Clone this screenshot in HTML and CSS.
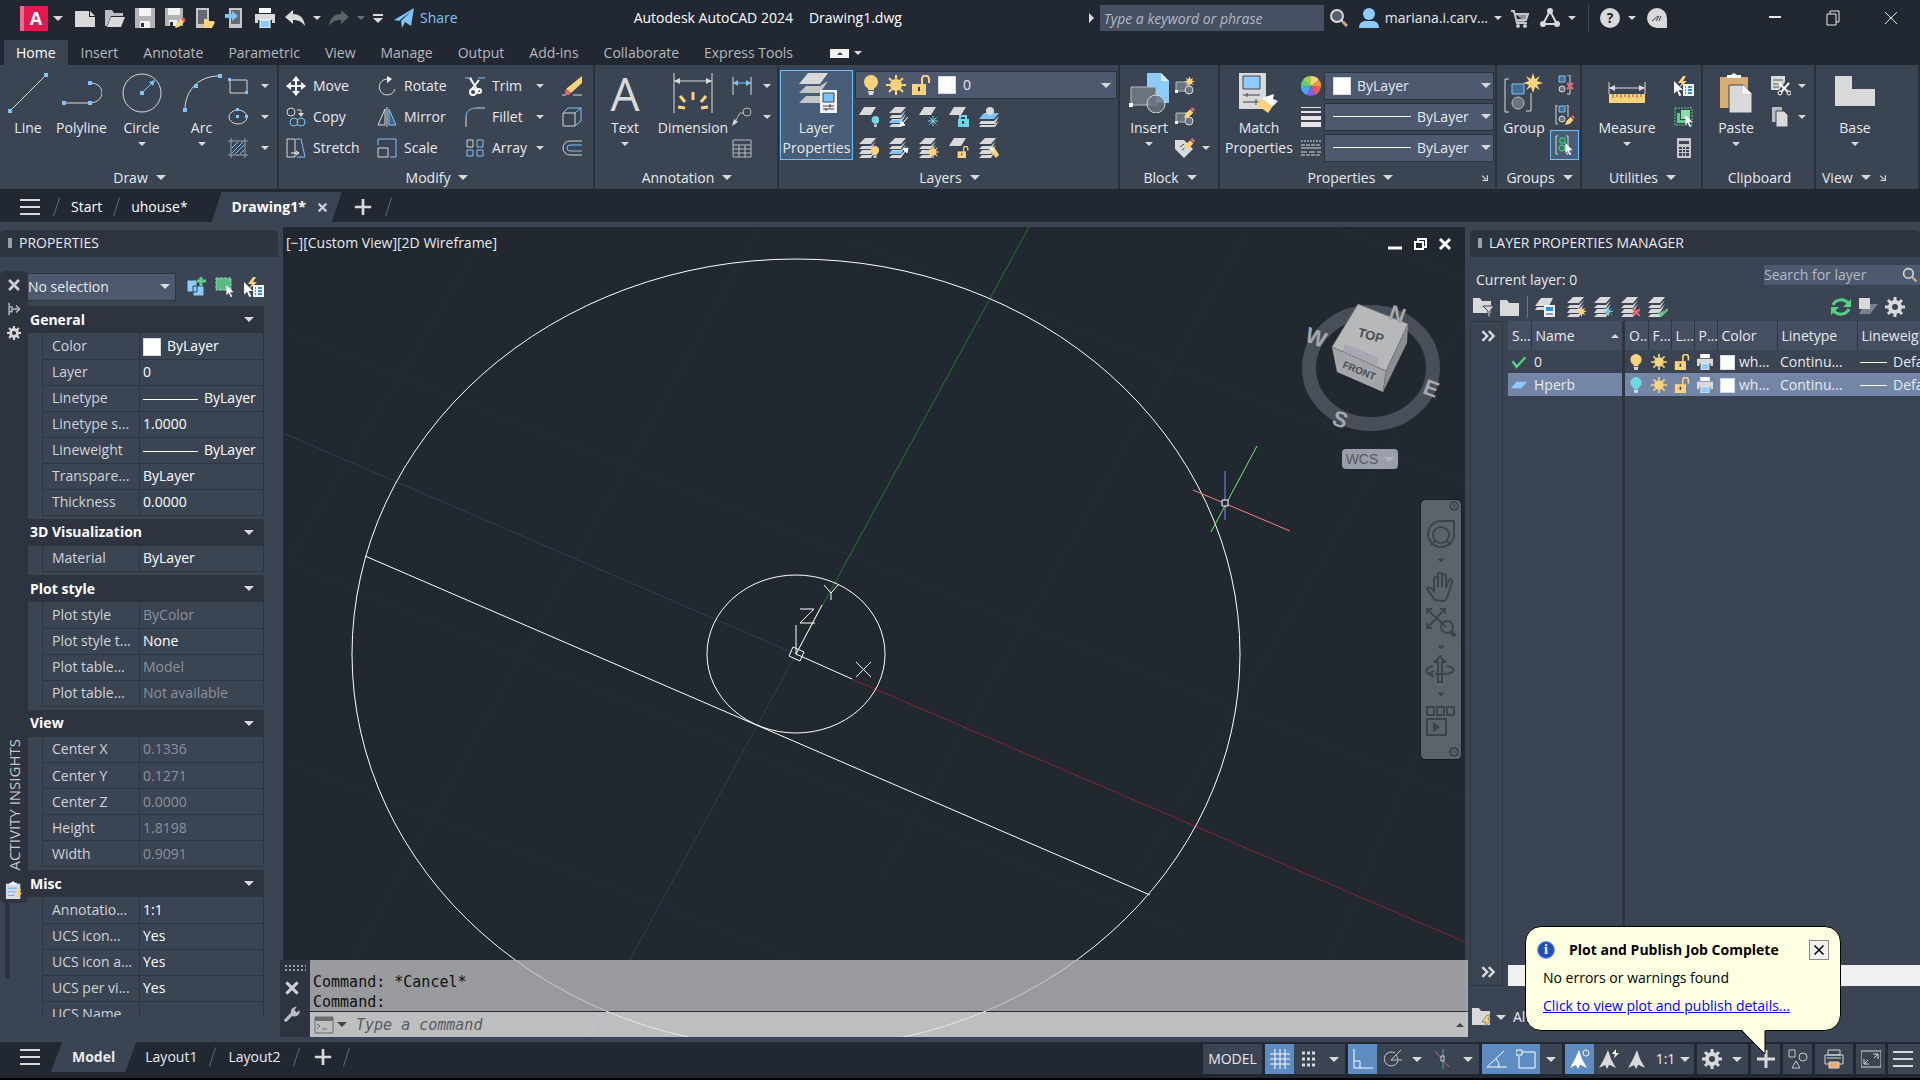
FILE: index.html
```html
<!DOCTYPE html>
<html lang="en">
<head>
    <meta charset="UTF-8">
    <meta name="viewport" content="width=device-width, initial-scale=1.0">
    <title>Autodesk AutoCAD 2024 - Drawing1.dwg</title>
    <link rel="stylesheet" href="styles.css">
</head>
<body>
    <!-- Icon library -->
    <svg class="defs" aria-hidden="true">
        <symbol id="file-new" viewBox="0 0 20 20"><path d="M0 3h14v6h6v10H0z" fill="#d9d9d9"/><path d="M15 3l5 5h-5z" fill="#d9d9d9"/></symbol>
        <symbol id="file-open" viewBox="0 0 20 20"><path d="M0 2h7l2 3h9v3H6L2 18H0z" fill="#b9bcc0"/><path d="M6 9h14l-4 10H2z" fill="#d9d9d9"/></symbol>
        <symbol id="save" viewBox="0 0 20 20"><path d="M0 0h20v20H0z" fill="#b4b4b6"/><path d="M4 0h12v8H4zM5 13h10v7H5z" fill="#f2f2f2"/><path d="M6 15h3v4H6z" fill="#2b313b"/></symbol>
        <symbol id="save-as" viewBox="0 0 20 20"><path d="M0 0h18v18H0z" fill="#b4b4b6"/><path d="M3 0h12v7H3zM4 12h8v6H4z" fill="#f2f2f2"/><path d="M5 14h3v4H5z" fill="#2b313b"/><path d="M10 20l1-4 6-6 3 3-6 6z" fill="#fcd27b"/><path d="M16 11l2-2 3 3-2 2z" fill="#e8575a"/></symbol>
        <symbol id="mobile-open" viewBox="0 0 20 20"><path d="M1 0h13v20H1z" fill="#c6c6c6"/><path d="M3 2h9v14H3z" fill="#656a72"/><path d="M9 11h4l1 2h4l2 1-3 6H9z" fill="#fcd27b"/></symbol>
        <symbol id="mobile-save" viewBox="0 0 20 20"><path d="M4 0h13v20H4z" fill="#c6c6c6"/><path d="M6 2h9v14H6z" fill="#656a72"/><path d="M0 6h7V3l6 5-6 5v-3H0z" fill="#7cc4fa"/></symbol>
        <symbol id="print" viewBox="0 0 20 20"><path d="M4 0h12v5H4z" fill="#fff"/><path d="M0 6h20v9h-3v-3H3v3H0z" fill="#d9d9d9"/><path d="M5 12h10v8H5z" fill="#8ccbfb" stroke="#fff"/></symbol>
        <symbol id="undo" viewBox="0 0 20 20"><path d="M0 9l8-7v4c7 0 11 4 12 12-3-4-6-6-12-6v4z" fill="#d9d9d9"/></symbol>
        <symbol id="redo" viewBox="0 0 20 20"><path d="M20 9l-8-7v4C5 6 1 10 0 18c3-4 6-6 12-6v4z" fill="#5c6067"/></symbol>
        <symbol id="plane" viewBox="0 0 20 20"><path d="M0 12L20 0l-3 18-6-4-3 6-1-7L17 3 5 13z" fill="#7cc4fa"/></symbol>
        <symbol id="search" viewBox="0 0 20 20"><circle cx="8" cy="8" r="6" fill="#55606f" stroke="#d9d9d9" stroke-width="2"/><path d="M12 12l2 2" stroke="#d9d9d9" stroke-width="2"/><path d="M14 14l4 4" stroke="#d6a96b" stroke-width="3"/></symbol>
        <symbol id="user" viewBox="0 0 20 20"><circle cx="10" cy="6" r="6" fill="#8ccbfb"/><path d="M0 20c0-6 4-7 7-7h6c3 0 7 1 7 7z" fill="#8ccbfb"/></symbol>
        <symbol id="cart" viewBox="0 0 20 20"><path d="M1 3h3l3 12h10M5 6h13l-2 6H6" stroke="#c6c6c6" stroke-width="2" fill="#8d9197"/><circle cx="8" cy="18" r="2" fill="#c6c6c6"/><circle cx="15" cy="18" r="2" fill="#c6c6c6"/></symbol>
        <symbol id="apps" viewBox="0 0 20 20"><path d="M10 3l7 13H3z" fill="none" stroke="#d9d9d9" stroke-width="2"/><circle cx="10" cy="3" r="3" fill="#d9d9d9"/><circle cx="3" cy="16" r="3" fill="#d9d9d9"/><circle cx="17" cy="16" r="3" fill="#d9d9d9"/></symbol>
        <symbol id="assist" viewBox="0 0 20 20"><path d="M10 0a10 10 0 0 1 10 10v10H10a10 10 0 0 1 0-20z" fill="#d9d9d9"/><path d="M5 13l6-5M9 13l3-5M12 13l2-5" stroke="#3b4453" stroke-width="1"/></symbol>
        <symbol id="line" viewBox="0 0 40 40"><path d="M2 38L38 2" stroke="#d9d9d9"/><path d="M0 36h4v4H0zM36 0h4v4h-4z" fill="#7cc4fa"/></symbol>
        <symbol id="polyline" viewBox="0 0 40 40"><path d="M2 30h26c16-1 16-20 0-20" stroke="#d9d9d9" fill="none"/><path d="M0 28h4v4H0zM26 28h4v4h-4zM26 8h4v4h-4z" fill="#7cc4fa"/></symbol>
        <symbol id="circle" viewBox="0 0 40 40"><circle cx="20" cy="20" r="19" stroke="#d9d9d9" fill="none"/><path d="M20 20L31 9" stroke="#7cc4fa"/><path d="M18 18h4v4h-4zM33 7l-6 2 4 4z" fill="#7cc4fa"/></symbol>
        <symbol id="arc" viewBox="0 0 40 40"><path d="M3 37C3 18 16 3 37 3" stroke="#d9d9d9" fill="none"/><path d="M1 35h4v4H1zM12 11h4v4h-4zM36 1h4v4h-4z" fill="#7cc4fa"/></symbol>
        <symbol id="rect" viewBox="0 0 20 20"><path d="M2 4h17v13H2z" stroke="#d9d9d9" fill="none"/><path d="M0 2h3v3H0zM17 15h3v3h-3z" fill="#7cc4fa"/></symbol>
        <symbol id="ellipse" viewBox="0 0 20 20"><ellipse cx="10" cy="10" rx="9" ry="7" stroke="#d9d9d9" fill="none"/><path d="M8 1h3v3H8zM8 8h3v3H8zM17 8h3v3h-3z" fill="#7cc4fa"/></symbol>
        <symbol id="hatch" viewBox="0 0 20 20"><path d="M3 0v20M17 0v20M0 3h20M0 17h20" stroke="#9aa0a8"/><path d="M4 10l6-6M4 15L15 4M7 16l9-9M12 16l4-4" stroke="#7cc4fa"/></symbol>
        <symbol id="move" viewBox="0 0 20 20"><path d="M10 2v16M2 10h16" stroke="#fff" stroke-width="2"/><path d="M10 0l4 5H6zM10 20l4-5H6zM0 10l5-4v8zM20 10l-5-4v8z" fill="#fff"/></symbol>
        <symbol id="copy" viewBox="0 0 20 20"><circle cx="5" cy="5" r="4" stroke="#d9d9d9" fill="none"/><circle cx="8" cy="15" r="4" stroke="#7cc4fa" fill="none"/><circle cx="15" cy="15" r="4" stroke="#7cc4fa" fill="none"/><path d="M11 3h4v5" stroke="#d9d9d9" fill="none"/><path d="M12 6h6l-3 4z" fill="#d9d9d9"/></symbol>
        <symbol id="stretch" viewBox="0 0 20 20"><path d="M1 1h8v18H1z" stroke="#d9d9d9" fill="none"/><path d="M10 1h5l4 18h-8" stroke="#7cc4fa" fill="none"/><path d="M5 15h7M10 13l3 2-3 2" stroke="#fff" fill="none"/></symbol>
        <symbol id="rotate" viewBox="0 0 20 20"><path d="M11 3a8 8 0 1 0 7 10" stroke="#d9d9d9" fill="none"/><path d="M10 0l5 3-5 4z" fill="#fff"/></symbol>
        <symbol id="mirror" viewBox="0 0 20 20"><path d="M8 2v16H1z" stroke="#d9d9d9" fill="none"/><path d="M12 2v16h7z" stroke="#7cc4fa" fill="#3f668a"/><path d="M10 0v20" stroke="#d9d9d9"/></symbol>
        <symbol id="scale" viewBox="0 0 20 20"><path d="M1 7V1h18v18h-6" stroke="#7cc4fa" fill="none"/><path d="M1 10h10v9H1z" stroke="#d9d9d9" fill="none"/></symbol>
        <symbol id="trim" viewBox="0 0 20 20"><path d="M0 2h7M13 2h7" stroke="#7cc4fa"/><path d="M5 2l8 13M14 4l-7 9" stroke="#fff" stroke-width="2"/><circle cx="8" cy="16" r="3" stroke="#fff" stroke-width="2" fill="none"/><circle cx="14" cy="15" r="2" stroke="#fff" stroke-width="2" fill="none"/></symbol>
        <symbol id="fillet" viewBox="0 0 20 20"><path d="M1 10C1 4 5 1 12 1" stroke="#7cc4fa" fill="none"/><path d="M1 10v10M12 1h8" stroke="#d9d9d9"/></symbol>
        <symbol id="array" viewBox="0 0 20 20"><path d="M2 2h6v7H2z" stroke="#d9d9d9" fill="none"/><path d="M12 2h6v7h-6zM2 12h6v6H2zM12 12h6v6h-6z" stroke="#7cc4fa" fill="none"/></symbol>
        <symbol id="erase" viewBox="0 0 20 20"><path d="M0 19h4M11 19h9" stroke="#d9d9d9"/><path d="M20 0v7L9 17l-5-4z" fill="#fcd27b"/><path d="M4 13l5 4-2 2H4l-1-3z" fill="#f0646a"/></symbol>
        <symbol id="explode" viewBox="0 0 20 20"><path d="M1 6h12v13H1z" stroke="#d9d9d9" fill="none"/><path d="M1 6l5-5h13l-6 5M19 1v13l-6 5" stroke="#7cc4fa" fill="none"/></symbol>
        <symbol id="offset" viewBox="0 0 20 20"><path d="M20 3H8a7 7 0 0 0 0 14h12" stroke="#d9d9d9" fill="none"/><path d="M20 7H8a3 3 0 0 0 0 6h12" stroke="#7cc4fa" fill="none"/></symbol>
        <symbol id="dimension" viewBox="0 0 40 40"><path d="M1 0v40M39 0v40M1 8h38" stroke="#d9d9d9"/><path d="M1 8l6-3v6zM39 8l-6-3v6z" fill="#d9d9d9"/><path d="M12 29l-5-6M20 27v-8M28 29l5-6M5 34l7 1M28 35l7-1" stroke="#fcd27b" stroke-width="3"/></symbol>
        <symbol id="linear" viewBox="0 0 20 20"><path d="M1 1v18M19 1v18" stroke="#d9d9d9"/><path d="M1 7h18" stroke="#7cc4fa"/><path d="M1 7l5-3v6zM19 7l-5-3v6z" fill="#7cc4fa"/></symbol>
        <symbol id="leader" viewBox="0 0 20 20"><circle cx="15" cy="5" r="4" stroke="#b9bcc0" fill="none"/><path d="M12 6H8L3 15" stroke="#b9bcc0" fill="none"/><path d="M0 19l2-7 4 3z" fill="#d9d9d9"/></symbol>
        <symbol id="table" viewBox="0 0 20 20"><path d="M1 2h18v17H1zM1 7h18M1 11h18M1 15h18M7 7v12M13 7v12" stroke="#b9bcc0" fill="none"/></symbol>
        <symbol id="sheets" viewBox="0 0 40 40"><path d="M11 0h20l-8 11H2z" fill="#d9d9d9"/><path d="M9 13h14l8-5-8 12H2zM9 23h14l8-6-8 13H2z" fill="#c6c6c6"/></symbol>
        <symbol id="layer-props" viewBox="0 0 40 40"><use href="#sheets" width="40" height="40"/><path d="M23 17h17v23H23z" fill="#f2f2f2"/><path d="M26 20h11v9H26z" fill="#7cc4fa" stroke="#3b4453"/><path d="M26 33h11M26 36h11M33 31v4M29 35v3" stroke="#3b4453"/></symbol>
        <symbol id="bulb" viewBox="0 0 20 20"><circle cx="10" cy="7" r="7" fill="#fcd27b"/><path d="M7 12h6v3H7z" fill="#fcd27b"/><path d="M7 16h6l-1 4H8z" fill="#d9d9d9"/></symbol>
        <symbol id="bulb-off" viewBox="0 0 20 20"><circle cx="10" cy="7" r="7" fill="#6fd8e4"/><path d="M7 12h6v3H7z" fill="#6fd8e4"/><path d="M7 16h6l-1 4H8z" fill="#d9d9d9"/></symbol>
        <symbol id="sun" viewBox="0 0 20 20"><path d="M10 0v4M10 16v4M0 10h4M16 10h4M3 3l3 3M14 14l3 3M3 17l3-3M14 6l3-3" stroke="#fcd27b" stroke-width="2"/><circle cx="10" cy="10" r="6" fill="#fcd27b"/></symbol>
        <symbol id="lock-open" viewBox="0 0 20 20"><path d="M11 10V4a3 3 0 0 1 7 0v4" stroke="#fcd27b" stroke-width="2" fill="none"/><path d="M1 9h14v11H1z" fill="#fcd27b"/><path d="M8 12v4" stroke="#3b4453" stroke-width="2"/></symbol>
        <symbol id="snow" viewBox="0 0 20 20"><path d="M10 0v20M0 10h20M3 3l14 14M17 3L3 17" stroke="#6fd8e4" stroke-width="2"/></symbol>
        <symbol id="sheet" viewBox="0 0 20 20"><path d="M5 0h12l-5 8H0z" fill="#d9d9d9"/></symbol>
        <symbol id="stack" viewBox="0 0 20 20"><path d="M6 0h11l-5 6H0zM3 8h9l5-5-5 8H0zM3 12h9l5-5-5 9H0zM3 17h9l5-5-5 8H0z" fill="#d9d9d9"/></symbol>
        <symbol id="stack-blue" viewBox="0 0 20 20"><use href="#stack" width="20" height="20"/><path d="M3 13h9l5-6-5 9H0z" fill="#7cc4fa"/></symbol>
        <symbol id="lay-off" viewBox="0 0 20 20"><use href="#sheet" width="20" height="20"/><use href="#bulb-off" x="11" y="9" width="11" height="11"/></symbol>
        <symbol id="lay-iso" viewBox="0 0 20 20"><use href="#stack-blue" width="20" height="20"/><path d="M19 10l-7 8M11 19l1-5 4 4z" stroke="#fff" fill="#fff"/></symbol>
        <symbol id="lay-freeze" viewBox="0 0 20 20"><use href="#sheet" width="20" height="20"/><use href="#snow" x="9" y="9" width="10" height="10"/></symbol>
        <symbol id="lay-lock" viewBox="0 0 20 20"><use href="#sheet" width="20" height="20"/><path d="M11 12V9h6v3" stroke="#6fd8e4" stroke-width="2" fill="none"/><path d="M9 12h11v8H9z" fill="#6fd8e4"/><path d="M14 14v3" stroke="#3b4453" stroke-width="2"/></symbol>
        <symbol id="lay-current" viewBox="0 0 20 20"><path d="M5 6h15l-5 6H0z" fill="#7cc4fa"/><path d="M2 14h13l5-5-4 8H0zM2 18h13l5-4-4 6H0z" fill="#d9d9d9"/><circle cx="11" cy="4" r="4" fill="#d9d9d9"/></symbol>
        <symbol id="lay-on" viewBox="0 0 20 20"><use href="#stack" width="20" height="20"/><use href="#bulb" x="10" y="8" width="12" height="12"/></symbol>
        <symbol id="lay-uniso" viewBox="0 0 20 20"><use href="#stack-blue" width="20" height="20"/><path d="M11 19l7-8M19 10l-1 5-4-4z" stroke="#fff" fill="#fff"/></symbol>
        <symbol id="lay-thaw" viewBox="0 0 20 20"><use href="#stack" width="20" height="20"/><use href="#sun" x="8" y="8" width="12" height="12"/></symbol>
        <symbol id="lay-unlock" viewBox="0 0 20 20"><use href="#sheet" width="20" height="20"/><use href="#lock-open" x="8" y="8" width="12" height="12"/></symbol>
        <symbol id="lay-match" viewBox="0 0 20 20"><use href="#stack" width="20" height="20"/><path d="M10 11l4-3 3 4 3 5-3 3z" fill="#fcd27b"/><path d="M10 10l5 0 0 5z" fill="#fff"/></symbol>
        <symbol id="insert" viewBox="0 0 40 40"><path d="M18 0h14l8 8v22H18z" fill="#8ccbfb"/><path d="M32 0l8 8h-8z" fill="#d6ecff"/><path d="M2 14h25v18H2z" fill="#6d737d" stroke="#b9bcc0"/><circle cx="27" cy="31" r="9" fill="#6d737d" fill-opacity=".8" stroke="#d9d9d9"/><path d="M0 30h4v4H0z" fill="#fff"/></symbol>
        <symbol id="blk" viewBox="0 0 20 20"><path d="M1 6h12v9H1z" fill="#6d737d" stroke="#b9bcc0"/><circle cx="14" cy="14" r="4" fill="#6d737d" stroke="#d9d9d9"/><path d="M0 14h3v3H0z" fill="#fff"/></symbol>
        <symbol id="star" viewBox="0 0 20 20"><path d="M10 0l2 6 5-3-3 5 6 2-6 2 3 5-5-3-2 6-2-6-5 3 3-5-6-2 6-2-3-5 5 3z" fill="#fcd27b"/></symbol>
        <symbol id="pencil" viewBox="0 0 20 20"><path d="M0 20l3-8 8-8 6 6-8 8z" fill="#fcd27b"/><path d="M12 3l3-3 5 5-3 3z" fill="#f0646a"/></symbol>
        <symbol id="blk-create" viewBox="0 0 20 20"><use href="#blk" width="20" height="20"/><use href="#star" x="9" y="0" width="11" height="11"/></symbol>
        <symbol id="blk-edit" viewBox="0 0 20 20"><use href="#blk" width="20" height="20"/><use href="#pencil" x="9" y="0" width="11" height="11"/></symbol>
        <symbol id="attr" viewBox="0 0 20 20"><path d="M0 2l9 0 9 9-9 9-9-9z" fill="#d9d9d9"/><path d="M5 9l4-3M7 12l5-4" stroke="#3b4453"/><use href="#pencil" x="9" y="0" width="11" height="11"/></symbol>
        <symbol id="match" viewBox="0 0 40 40"><path d="M0 0h27v36H0z" fill="#d9d9d9"/><path d="M4 3h17v13H4z" fill="#8ccbfb" stroke="#3b4453"/><path d="M4 22h17M4 29h17M8 20v4M17 26v6" stroke="#3b4453"/><path d="M17 31l8-6 9 8-5 7z" fill="#fcd27b"/><path d="M23 25l6-2 6-2-1 5 5 2-5 5-3-1z" fill="#fff"/></symbol>
        <symbol id="wheel" viewBox="0 0 20 20"><path d="M10 10V0c4 0 6 1 8 4z" fill="#fcd27b"/><path d="M10 10l8-6c2 2 2 4 2 7z" fill="#f59a3c"/><path d="M10 10l10 1c-1 4-3 7-6 8z" fill="#e8575a"/><path d="M10 10l4 9c-3 1-5 1-8 0z" fill="#8d5cf0"/><path d="M10 10L6 19c-3-1-6-4-6-8z" fill="#4aa8f0"/><path d="M10 10L0 11c0-3 0-5 2-7z" fill="#55d27e"/><path d="M10 10L2 4c2-3 4-4 8-4z" fill="#a4cf4a"/></symbol>
        <symbol id="weights" viewBox="0 0 20 20"><path d="M0 0h20v1H0zM0 4h20v2H0zM0 9h20v4H0zM0 15h20v5H0z" fill="#e6e6e6"/></symbol>
        <symbol id="types" viewBox="0 0 20 20"><path d="M0 3h20" stroke="#d9d9d9" stroke-dasharray="2 1"/><path d="M0 7h20M0 17h20" stroke="#d9d9d9" stroke-dasharray="4 1"/><path d="M0 10h20" stroke="#d9d9d9"/><path d="M0 14h20" stroke="#d9d9d9" stroke-dasharray="6 2"/></symbol>
        <symbol id="group" viewBox="0 0 40 40"><path d="M5 6H1v33h4M22 38h5V20" stroke="#d9d9d9" fill="none"/><path d="M8 11h12v10H8z" fill="#3f6d94" stroke="#7cc4fa"/><circle cx="14" cy="30" r="6" fill="#6d737d" stroke="#b9bcc0"/><use href="#star" x="19" y="0" width="20" height="20"/></symbol>
        <symbol id="grp" viewBox="0 0 20 20"><path d="M4 1h6v6H4z" fill="#3f6d94" stroke="#7cc4fa"/><circle cx="7" cy="14" r="3" fill="#6d737d" stroke="#d9d9d9"/></symbol>
        <symbol id="ungroup" viewBox="0 0 20 20"><use href="#grp" width="20" height="20"/><path d="M12 0h3v19h-3" stroke="#d9d9d9" fill="none"/><path d="M12 8l6 6M18 8l-6 6" stroke="#f0646a" stroke-width="2"/></symbol>
        <symbol id="grp-edit" viewBox="0 0 20 20"><use href="#grp" width="20" height="20"/><path d="M3 0H1v19h2M11 0h2v12" stroke="#d9d9d9" fill="none"/><use href="#pencil" x="10" y="10" width="10" height="10"/></symbol>
        <symbol id="cursor" viewBox="0 0 20 20"><path d="M4 0l12 12h-6l4 7-3 1-3-7-4 4z" fill="#fff"/></symbol>
        <symbol id="grp-sel" viewBox="0 0 20 20"><path d="M3 1H1v18h2M11 1h2v18h-2" stroke="#d9d9d9" fill="none"/><path d="M5 3h5v5H5z" fill="#2f7d55" stroke="#55d27e"/><circle cx="7" cy="13" r="3" fill="#2f7d55" stroke="#55d27e"/><use href="#cursor" x="8" y="8" width="12" height="12"/></symbol>
        <symbol id="measure" viewBox="0 0 40 40"><path d="M2 9v12M38 9v12M2 15h36" stroke="#d9d9d9"/><path d="M2 15l6-3v6zM38 15l-6-3v6z" fill="#d9d9d9"/><path d="M2 21h36v9H2z" fill="#fcd27b"/><path d="M6 21v4M10 21v3M14 21v4M18 21v3M22 21v4M26 21v3M30 21v4M34 21v3" stroke="#7a6433"/></symbol>
        <symbol id="quick" viewBox="0 0 20 20"><path d="M9 0L4 7h4l-3 5 8-7H9l3-5z" fill="#fcd27b"/><use href="#cursor" x="-3" y="5" width="15" height="15"/><path d="M9 8h11v12H9z" fill="#f2f2f2"/><path d="M11 11h1M14 11h4M11 14h1M14 14h4M11 17h1M14 17h4" stroke="#2f8fe0" stroke-width="2"/></symbol>
        <symbol id="sel-all" viewBox="0 0 20 20"><path d="M1 1h17v17H1z" stroke="#55d27e" stroke-dasharray="2 1" fill="none"/><path d="M7 3h9v9H7z" fill="#86dfa5"/><path d="M3 6h3v7h7v3H3z" fill="#55d27e"/><use href="#cursor" x="9" y="8" width="12" height="12"/></symbol>
        <symbol id="select" viewBox="0 0 20 20"><path d="M1 1h15v12H1z" fill="#5cb985" stroke="#86dfa5" stroke-dasharray="3 1"/><use href="#cursor" x="9" y="8" width="12" height="12"/></symbol>
        <symbol id="pickadd" viewBox="0 0 20 20"><path d="M1 3h10v12H1zM7 9h11v10H7z" fill="#8ccbfb" stroke="#3b4453"/><path d="M15 0v9M11 4h9" stroke="#55d27e" stroke-width="3"/></symbol>
        <symbol id="calc" viewBox="0 0 20 20"><path d="M3 0h14v20H3z" fill="#c6c6c6"/><path d="M5 3h10v3H5z" fill="#3b4453"/><path d="M5 9h3v2H5zM9 9h2v2H9zM12 9h3v2h-3zM5 12h3v2H5zM9 12h2v2H9zM12 12h3v2h-3zM5 15h3v3H5zM9 15h2v3H9zM12 15h3v3h-3z" fill="#3b4453"/></symbol>
        <symbol id="paste" viewBox="0 0 40 40"><path d="M4 4h28v31H4z" fill="#d9ac71"/><path d="M11 5V2h4l3-2 3 2h4v3z" fill="#fff"/><path d="M13 12h14l9 9v19H13z" fill="#d9d9d9" stroke="#3b4453"/><path d="M27 12l9 9h-9z" fill="#fff"/></symbol>
        <symbol id="cut" viewBox="0 0 20 20"><path d="M0 0h14v6l-6 8H0z" fill="#d9d9d9"/><path d="M2 4h10M2 8h7M2 11h6" stroke="#59606c"/><path d="M8 7l9 9M18 7l-8 9" stroke="#fff" stroke-width="2"/><circle cx="9" cy="17" r="2" stroke="#fff" fill="none"/><circle cx="18" cy="17" r="2" stroke="#fff" fill="none"/></symbol>
        <symbol id="copy-clip" viewBox="0 0 20 20"><path d="M1 0h10v15H1z" fill="#b9bcc0"/><path d="M5 4h8l4 4v12H5z" fill="#d9d9d9" stroke="#3b4453"/></symbol>
        <symbol id="base" viewBox="0 0 40 40"><path d="M0 3h17v13h23v17H0z" fill="#d9d9d9"/></symbol>
        <symbol id="gear" viewBox="0 0 20 20"><circle cx="10" cy="10" r="5" fill="none" stroke="#d9d9d9" stroke-width="4"/><path d="M10 0v4M10 16v4M0 10h4M16 10h4M3 3l3 3M14 14l3 3M3 17l3-3M14 6l3-3" stroke="#d9d9d9" stroke-width="3"/></symbol>
        <symbol id="x" viewBox="0 0 20 20"><path d="M3 3l14 14M17 3L3 17" stroke="#c9ccd1" stroke-width="4"/></symbol>
        <symbol id="plus" viewBox="0 0 20 20"><path d="M10 1v18M1 10h18" stroke="#d9d9d9" stroke-width="3"/></symbol>
        <symbol id="menu" viewBox="0 0 20 20"><path d="M0 3h20M0 10h20M0 17h20" stroke="#d9d9d9" stroke-width="2"/></symbol>
        <symbol id="corner" viewBox="0 0 20 20"><path d="M3 4l9 9M16 3v13H4" stroke="#d9d9d9" stroke-width="3" fill="none"/></symbol>
        <symbol id="chevrons" viewBox="0 0 20 20"><path d="M3 4l6 6-6 6M11 4l6 6-6 6" stroke="#d9d9d9" stroke-width="3" fill="none"/></symbol>
        <symbol id="dock" viewBox="0 0 20 20"><path d="M3 1v18M3 7h4v7H3" stroke="#b9bcc0" stroke-width="2" fill="none"/><path d="M8 10h8M13 5l5 5-5 5" stroke="#b9bcc0" stroke-width="2" fill="none"/></symbol>
        <symbol id="insights" viewBox="0 0 20 20"><path d="M1 3h16v17H1z" fill="#d9dde2"/><path d="M5 4V2h2l2-2 2 2h2v2z" fill="#fff"/><path d="M3 8h10M3 12h9M3 16h8" stroke="#4aa8f0"/><path d="M15 9l-4 6h3l-1 5 6-7h-3l2-4z" fill="#fcd27b"/></symbol>
        <symbol id="folder" viewBox="0 0 20 20"><path d="M0 3h7l2 3h10v13H0z" fill="#d9d9d9"/></symbol>
        <symbol id="folder-filter" viewBox="0 0 20 20"><path d="M0 1h7l2 3h9v12H0z" fill="#d9d9d9"/><path d="M10 9h11l-4 5v6h-2v-6z" fill="#d9d9d9" stroke="#3b4453"/></symbol>
        <symbol id="folder-flash" viewBox="0 0 20 20"><path d="M0 1h7l2 3h9v14H0z" fill="#d9d9d9"/><path d="M15 8l-5 7h4l-1 5 6-7h-3l2-5z" fill="#fcd27b" stroke="#3b4453" stroke-width=".5"/></symbol>
        <symbol id="lay-state" viewBox="0 0 20 20"><path d="M6 1h12l-4 8H0zM2 10h8v3H0z" fill="#d9d9d9"/><path d="M9 8h11v12H9z" fill="#f2f2f2"/><path d="M11 10h7v4h-7z" fill="#2f8fe0"/><path d="M11 17h7" stroke="#3b4453"/></symbol>
        <symbol id="lay-new" viewBox="0 0 20 20"><use href="#stack" width="20" height="20"/><use href="#star" x="9" y="9" width="11" height="11"/></symbol>
        <symbol id="lay-vp" viewBox="0 0 20 20"><use href="#stack" width="20" height="20"/><use href="#snow" x="10" y="10" width="9" height="9"/></symbol>
        <symbol id="lay-del" viewBox="0 0 20 20"><use href="#stack" width="20" height="20"/><path d="M12 12l7 7M19 12l-7 7" stroke="#f0646a" stroke-width="2"/></symbol>
        <symbol id="lay-set" viewBox="0 0 20 20"><use href="#stack" width="20" height="20"/><path d="M10 15l3 4 7-7" stroke="#55d27e" stroke-width="2" fill="none"/></symbol>
        <symbol id="refresh" viewBox="0 0 20 20"><path d="M2 8c3-6 11-7 15-2M18 12c-3 6-11 7-15 2" stroke="#55d27e" stroke-width="3" fill="none"/><path d="M20 2v8h-8zM0 18v-8h8z" fill="#55d27e"/></symbol>
        <symbol id="toggle" viewBox="0 0 20 20"><path d="M4 12L1 17h11l8-10h-7z" fill="#7b828d"/><path d="M1 1h11v11H1z" fill="#d9d9d9"/></symbol>
        <symbol id="check" viewBox="0 0 20 20"><path d="M2 9l5 7L18 4" stroke="#55d27e" stroke-width="3" fill="none"/></symbol>
        <symbol id="layer-blue" viewBox="0 0 20 20"><path d="M7 6h13l-7 8H0z" fill="#8ccbfb"/></symbol>
        <symbol id="wrench" viewBox="0 0 20 20"><path d="M1 19l9-9" stroke="#b9bcc0" stroke-width="4"/><path d="M9 11c-2-6 2-10 7-10l-3 4 3 3 3-3c2 4-2 9-7 8z" fill="#b9bcc0"/></symbol>
        <symbol id="prompt" viewBox="0 0 20 20"><path d="M1 2h18v16H1z" fill="none" stroke="#6b6c6e"/><path d="M1 2h18v4H1z" fill="#6b6c6e"/><path d="M3 9l3 2-3 3M8 14h5" stroke="#6b6c6e" fill="none"/></symbol>
        <symbol id="s-grid" viewBox="0 0 20 20"><path d="M0 5h20M0 10h20M0 15h20M5 0v20M10 0v20M15 0v20" stroke="#fff"/></symbol>
        <symbol id="s-snap" viewBox="0 0 20 20"><path d="M3 4h14M3 10h14M3 16h14" stroke="#d9d9d9" stroke-width="3" stroke-dasharray="3 2"/></symbol>
        <symbol id="s-ortho" viewBox="0 0 20 20"><path d="M1 0v19h19M1 12h6v7" stroke="#fff" fill="none"/></symbol>
        <symbol id="s-polar" viewBox="0 0 20 20"><path d="M13 4a7 7 0 1 0 3 8M9 11L19 1M9 11h11M16 11a7 7 0 0 0-2-5" stroke="#c6c6c6" fill="none"/></symbol>
        <symbol id="s-iso" viewBox="0 0 20 20"><path d="M10 0v20" stroke="#55a878"/><path d="M2 2l14 16" stroke="#b56a6a"/><path d="M8 7h3v5H8z" fill="#3b4453" stroke="#d9d9d9"/></symbol>
        <symbol id="s-track" viewBox="0 0 20 20"><path d="M0 18L17 2M0 18h20M9 10a9 9 0 0 1 3 8" stroke="#fff" fill="none"/></symbol>
        <symbol id="s-osnap" viewBox="0 0 20 20"><path d="M6 3h13v16H3V7M0 1h6v5H0z" stroke="#fff" fill="none"/></symbol>
        <symbol id="s-anno" viewBox="0 0 20 20"><path d="M9 1l3 9 5 9-6-3h-1l-2 4-2-4-6 3 5-9z" fill="#d9d9d9"/></symbol>
        <symbol id="s-vis" viewBox="0 0 20 20"><path d="M9 1l3 9 5 9-6-3h-1l-2 4-2-4-6 3 5-9z" fill="#fff"/><circle cx="16" cy="4" r="3" stroke="#fff" fill="#5c8cc2"/></symbol>
        <symbol id="s-auto" viewBox="0 0 20 20"><use href="#s-anno" width="20" height="20"/><path d="M17 0l-4 5h3l-1 4 5-5h-3z" fill="#fff"/></symbol>
        <symbol id="s-shapes" viewBox="0 0 20 20"><path d="M1 1h6v7H1zM9 19l-5 0 4-7 4 7z" stroke="#c6c6c6" fill="none"/><circle cx="15" cy="8" r="4" stroke="#c6c6c6" fill="none"/></symbol>
        <symbol id="s-plot" viewBox="0 0 20 20"><path d="M4 1h12v5H4zM1 6h18v9H1zM3 9h14" fill="none" stroke="#d9d9d9"/><path d="M5 13h10v6H5z" fill="#f0a86a" stroke="#d9d9d9"/></symbol>
        <symbol id="s-full" viewBox="0 0 20 20"><path d="M0 2h20v16H0z" fill="none" stroke="#d9d9d9"/><path d="M12 5h5v5M8 15H3v-5M17 5l-4 4M3 15l4-4" stroke="#d9d9d9" fill="none"/></symbol>
    </svg>

    <header class="titlebar">
        <button class="logo" aria-label="Application menu">A</button><span class="caret"></span>
        <div class="quick-access">
            <button aria-label="New"><svg><use href="#file-new"/></svg></button>
            <button aria-label="Open"><svg><use href="#file-open"/></svg></button>
            <button aria-label="Save"><svg><use href="#save"/></svg></button>
            <button aria-label="Save as"><svg><use href="#save-as"/></svg></button>
            <button aria-label="Open from mobile"><svg><use href="#mobile-open"/></svg></button>
            <button aria-label="Save to mobile"><svg><use href="#mobile-save"/></svg></button>
            <button aria-label="Plot"><svg><use href="#print"/></svg></button>
            <button aria-label="Undo"><svg><use href="#undo"/></svg></button>
            <span class="caret small"></span>
            <button aria-label="Redo"><svg><use href="#redo"/></svg></button>
            <span class="caret small dim"></span>
            <span class="caret bar"></span>
        </div>
        <button class="share"><svg><use href="#plane"/></svg>Share</button>
        <div class="window-title"><span>Autodesk AutoCAD 2024</span><span>Drawing1.dwg</span></div>
        <div class="account">
            <span class="caret right"></span>
            <input type="text" class="help-search" placeholder="Type a keyword or phrase" aria-label="Type a keyword or phrase">
            <button aria-label="Search"><svg><use href="#search"/></svg></button>
            <button class="user"><svg><use href="#user"/></svg>mariana.i.carv...<span class="caret small"></span></button>
            <button aria-label="Cart"><svg><use href="#cart"/></svg></button>
            <button class="apps" aria-label="Apps"><svg><use href="#apps"/></svg><span class="caret small"></span></button>
            <button class="help" aria-label="Help"><span class="help-mark">?</span><span class="caret small"></span></button>
            <button aria-label="Assistant"><svg><use href="#assist"/></svg></button>
        </div>
        <div class="window-buttons">
            <button aria-label="Minimize"><svg viewBox="0 0 20 20"><path d="M4 9h12" stroke="#e6e6e6" stroke-width="2"/></svg></button>
            <button aria-label="Restore"><svg viewBox="0 0 20 20"><path d="M4 6h9v11H4zM7 6V3h9v11h-3" fill="none" stroke="#e6e6e6"/></svg></button>
            <button aria-label="Close"><svg viewBox="0 0 20 20"><path d="M4 4l12 12M16 4L4 16" stroke="#e6e6e6"/></svg></button>
        </div>
    </header>

    <nav class="ribbon-tabs">
        <a href="#" class="active">Home</a>
        <a href="#">Insert</a>
        <a href="#">Annotate</a>
        <a href="#">Parametric</a>
        <a href="#">View</a>
        <a href="#">Manage</a>
        <a href="#">Output</a>
        <a href="#">Add-ins</a>
        <a href="#">Collaborate</a>
        <a href="#">Express Tools</a>
        <button class="minimize-ribbon" aria-label="Minimize ribbon"><span class="caret up"></span></button>
        <span class="caret small"></span>
    </nav>

    <section class="ribbon">
        <div class="panel draw">
            <div class="tools">
                <button class="big"><svg><use href="#line"/></svg>Line</button>
                <button class="big"><svg><use href="#polyline"/></svg>Polyline</button>
                <button class="big"><svg><use href="#circle"/></svg>Circle<span class="caret small"></span></button>
                <button class="big"><svg><use href="#arc"/></svg>Arc<span class="caret small"></span></button>
                <div class="stack">
                    <button class="tool" aria-label="Rectangle"><svg><use href="#rect"/></svg><span class="caret small"></span></button>
                    <button class="tool" aria-label="Ellipse"><svg><use href="#ellipse"/></svg><span class="caret small"></span></button>
                    <button class="tool" aria-label="Hatch"><svg><use href="#hatch"/></svg><span class="caret small"></span></button>
                </div>
            </div>
            <div class="panel-title">Draw<span class="caret"></span></div>
        </div>
        <div class="panel modify">
            <div class="tools">
                <div class="stack">
                    <button class="tool"><svg><use href="#move"/></svg>Move</button>
                    <button class="tool"><svg><use href="#copy"/></svg>Copy</button>
                    <button class="tool"><svg><use href="#stretch"/></svg>Stretch</button>
                </div>
                <div class="stack">
                    <button class="tool"><svg><use href="#rotate"/></svg>Rotate</button>
                    <button class="tool"><svg><use href="#mirror"/></svg>Mirror</button>
                    <button class="tool"><svg><use href="#scale"/></svg>Scale</button>
                </div>
                <div class="stack wide">
                    <button class="tool"><svg><use href="#trim"/></svg>Trim<span class="caret small"></span></button>
                    <button class="tool"><svg><use href="#fillet"/></svg>Fillet<span class="caret small"></span></button>
                    <button class="tool"><svg><use href="#array"/></svg>Array<span class="caret small"></span></button>
                </div>
                <div class="stack">
                    <button class="tool" aria-label="Erase"><svg><use href="#erase"/></svg></button>
                    <button class="tool" aria-label="Explode"><svg><use href="#explode"/></svg></button>
                    <button class="tool" aria-label="Offset"><svg><use href="#offset"/></svg></button>
                </div>
            </div>
            <div class="panel-title">Modify<span class="caret"></span></div>
        </div>
        <div class="panel annotation">
            <div class="tools">
                <button class="big"><span class="letter">A</span>Text<span class="caret small"></span></button>
                <button class="big"><svg><use href="#dimension"/></svg>Dimension</button>
                <div class="stack">
                    <button class="tool" aria-label="Linear"><svg><use href="#linear"/></svg><span class="caret small"></span></button>
                    <button class="tool" aria-label="Leader"><svg><use href="#leader"/></svg><span class="caret small"></span></button>
                    <button class="tool" aria-label="Table"><svg><use href="#table"/></svg></button>
                </div>
            </div>
            <div class="panel-title">Annotation<span class="caret"></span></div>
        </div>
        <div class="panel layers">
            <div class="tools">
                <button class="big pressed"><svg><use href="#layer-props"/></svg>Layer<br>Properties</button>
                <div class="stack">
                    <button class="combo"><svg><use href="#bulb"/></svg><svg><use href="#sun"/></svg><svg><use href="#lock-open"/></svg><i class="swatch"></i>0<span class="caret"></span></button>
                    <div class="icon-row">
                        <button aria-label="Off"><svg><use href="#lay-off"/></svg></button>
                        <button aria-label="Isolate"><svg><use href="#lay-iso"/></svg></button>
                        <button aria-label="Freeze"><svg><use href="#lay-freeze"/></svg></button>
                        <button aria-label="Lock"><svg><use href="#lay-lock"/></svg></button>
                        <button aria-label="Make current"><svg><use href="#lay-current"/></svg></button>
                    </div>
                    <div class="icon-row">
                        <button aria-label="Turn all on"><svg><use href="#lay-on"/></svg></button>
                        <button aria-label="Unisolate"><svg><use href="#lay-uniso"/></svg></button>
                        <button aria-label="Thaw all"><svg><use href="#lay-thaw"/></svg></button>
                        <button aria-label="Unlock"><svg><use href="#lay-unlock"/></svg></button>
                        <button aria-label="Match layer"><svg><use href="#lay-match"/></svg></button>
                    </div>
                </div>
            </div>
            <div class="panel-title">Layers<span class="caret"></span></div>
        </div>
        <div class="panel block">
            <div class="tools">
                <button class="big"><svg><use href="#insert"/></svg>Insert<span class="caret small"></span></button>
                <div class="stack">
                    <button class="tool" aria-label="Create block"><svg><use href="#blk-create"/></svg></button>
                    <button class="tool" aria-label="Edit block"><svg><use href="#blk-edit"/></svg></button>
                    <button class="tool" aria-label="Edit attributes"><svg><use href="#attr"/></svg><span class="caret small"></span></button>
                </div>
            </div>
            <div class="panel-title">Block<span class="caret"></span></div>
        </div>
        <div class="panel props">
            <div class="tools">
                <button class="big"><svg><use href="#match"/></svg>Match<br>Properties</button>
                <div class="stack">
                    <div class="prop"><svg><use href="#wheel"/></svg><button class="combo"><i class="swatch"></i>ByLayer<span class="caret"></span></button></div>
                    <div class="prop"><svg><use href="#weights"/></svg><button class="combo"><i class="rule"></i>ByLayer<span class="caret"></span></button></div>
                    <div class="prop"><svg><use href="#types"/></svg><button class="combo"><i class="rule"></i>ByLayer<span class="caret"></span></button></div>
                </div>
            </div>
            <div class="panel-title">Properties<span class="caret"></span><svg><use href="#corner"/></svg></div>
        </div>
        <div class="panel groups">
            <div class="tools">
                <button class="big"><svg><use href="#group"/></svg>Group</button>
                <div class="stack">
                    <button class="tool" aria-label="Ungroup"><svg><use href="#ungroup"/></svg></button>
                    <button class="tool" aria-label="Group edit"><svg><use href="#grp-edit"/></svg></button>
                    <button class="tool pressed" aria-label="Group selection"><svg><use href="#grp-sel"/></svg></button>
                </div>
            </div>
            <div class="panel-title">Groups<span class="caret"></span></div>
        </div>
        <div class="panel utilities">
            <div class="tools">
                <button class="big"><svg><use href="#measure"/></svg>Measure<span class="caret small"></span></button>
                <div class="stack">
                    <button class="tool" aria-label="Quick select"><svg><use href="#quick"/></svg></button>
                    <button class="tool" aria-label="Select all"><svg><use href="#sel-all"/></svg></button>
                    <button class="tool" aria-label="Calculator"><svg><use href="#calc"/></svg></button>
                </div>
            </div>
            <div class="panel-title">Utilities<span class="caret"></span></div>
        </div>
        <div class="panel clipboard">
            <div class="tools">
                <button class="big"><svg><use href="#paste"/></svg>Paste<span class="caret small"></span></button>
                <div class="stack">
                    <button class="tool" aria-label="Cut"><svg><use href="#cut"/></svg><span class="caret small"></span></button>
                    <button class="tool" aria-label="Copy clip"><svg><use href="#copy-clip"/></svg><span class="caret small"></span></button>
                </div>
            </div>
            <div class="panel-title">Clipboard</div>
        </div>
        <div class="panel view">
            <div class="tools">
                <button class="big"><svg><use href="#base"/></svg>Base<span class="caret small"></span></button>
            </div>
            <div class="panel-title">View<span class="caret"></span><svg><use href="#corner"/></svg></div>
        </div>
    </section>

    <nav class="file-tabs">
        <button class="menu" aria-label="File tab menu"><svg><use href="#menu"/></svg></button>
        <i class="slash"></i>
        <a href="#">Start</a>
        <i class="slash"></i>
        <a href="#">uhouse*</a>
        <a href="#" class="active">Drawing1*<svg><use href="#x"/></svg></a>
        <button class="add" aria-label="New tab"><svg><use href="#plus"/></svg></button>
        <i class="slash"></i>
    </nav>

    <main>
        <aside class="properties">
            <h2 class="palette-title"><i class="grip"></i>PROPERTIES</h2>
            <div class="palette-body">
                <div class="palette-tab">
                    <button aria-label="Close"><svg><use href="#x"/></svg></button>
                    <button aria-label="Auto-hide"><svg><use href="#dock"/></svg></button>
                    <button aria-label="Settings"><svg><use href="#gear"/></svg></button>
                    <span class="vertical">ACTIVITY INSIGHTS</span>
                    <svg class="insights"><use href="#insights"/></svg>
                    <i class="scroll"></i>
                </div>
                <div class="grid">
                    <div class="selection">
                        <button class="combo">No selection<span class="caret"></span></button>
                        <button aria-label="Toggle PICKADD"><svg><use href="#pickadd"/></svg></button>
                        <button aria-label="Select objects"><svg><use href="#select"/></svg></button>
                        <button aria-label="Quick select"><svg><use href="#quick"/></svg></button>
                    </div>
                    <h3>General<span class="caret"></span></h3>
                    <table>
                        <tr><th>Color</th><td><i class="swatch"></i>ByLayer</td></tr>
                        <tr><th>Layer</th><td>0</td></tr>
                        <tr><th>Linetype</th><td><i class="rule"></i>ByLayer</td></tr>
                        <tr><th>Linetype s...</th><td>1.0000</td></tr>
                        <tr><th>Lineweight</th><td><i class="rule"></i>ByLayer</td></tr>
                        <tr><th>Transpare...</th><td>ByLayer</td></tr>
                        <tr><th>Thickness</th><td>0.0000</td></tr>
                    </table>
                    <h3>3D Visualization<span class="caret"></span></h3>
                    <table>
                        <tr><th>Material</th><td>ByLayer</td></tr>
                    </table>
                    <h3>Plot style<span class="caret"></span></h3>
                    <table>
                        <tr><th>Plot style</th><td class="off">ByColor</td></tr>
                        <tr><th>Plot style t...</th><td>None</td></tr>
                        <tr><th>Plot table...</th><td class="off">Model</td></tr>
                        <tr><th>Plot table...</th><td class="off">Not available</td></tr>
                    </table>
                    <h3>View<span class="caret"></span></h3>
                    <table>
                        <tr><th>Center X</th><td class="off">0.1336</td></tr>
                        <tr><th>Center Y</th><td class="off">0.1271</td></tr>
                        <tr><th>Center Z</th><td class="off">0.0000</td></tr>
                        <tr><th>Height</th><td class="off">1.8198</td></tr>
                        <tr><th>Width</th><td class="off">0.9091</td></tr>
                    </table>
                    <h3>Misc<span class="caret"></span></h3>
                    <table>
                        <tr><th>Annotatio...</th><td>1:1</td></tr>
                        <tr><th>UCS icon...</th><td>Yes</td></tr>
                        <tr><th>UCS icon a...</th><td>Yes</td></tr>
                        <tr><th>UCS per vi...</th><td>Yes</td></tr>
                        <tr><th>UCS Name</th><td></td></tr>
                    </table>
                </div>
            </div>
        </aside>

        <section class="viewport">
            <!-- Model space -->
            <svg class="drawing" viewBox="283 227 1182 810" preserveAspectRatio="xMinYMin slice" fill="none">
                <g stroke="#252d38">
                    <path d="M1335 227L1465 279M283 330L1465 800M850 240L1465 482M283 560L1180 930M283 760L800 960"/>
                    <path d="M1465 320L1140 870M490 227L283 570M760 227L310 1037M1250 227L880 880M1465 640L1330 960"/>
                </g>
                <path d="M283 433L796 654M796 654L588 1037" stroke="#343e50"/>
                <path d="M796 654L1029 227" stroke="#1f7a26"/>
                <path d="M852 679L1465 942" stroke="#8a2329"/>
                <g stroke="#fff">
                    <ellipse cx="796" cy="654" rx="444" ry="395"/>
                    <ellipse cx="796" cy="654" rx="89" ry="79"/>
                    <path d="M365 556L1150 895"/>
                    <path d="M796 654V625M796 654L822 605M796 654L852 679"/>
                    <path d="M793 647l11 5-4 9-11-5z"/>
                    <path d="M800 609h14l-14 14h15M824 585l7 8 7-8M831 593v7M856 662l15 15M871 662l-15 15"/>
                </g>
                <path d="M1193 490L1290 531" stroke="#ff7b7b"/>
                <path d="M1211 532L1257 446" stroke="#6ef06e"/>
                <path d="M1225 471V520" stroke="#8080ff"/>
                <path d="M1222 500h6v6h-6z" stroke="#fff" fill="#212830"/>
            </svg>
            <div class="view-controls"><button>[−]</button><button>[Custom View]</button><button>[2D Wireframe]</button></div>
            <div class="view-window">
                <button aria-label="Minimize"><svg viewBox="0 0 16 16"><path d="M1 12h14" stroke="#fff" stroke-width="3"/></svg></button>
                <button aria-label="Restore"><svg viewBox="0 0 16 16"><path d="M3 6h8v7H3zM6 5V3h8v8h-3" fill="none" stroke="#fff" stroke-width="2"/></svg></button>
                <button aria-label="Close"><svg viewBox="0 0 16 16"><path d="M3 3l10 10M13 3L3 13" stroke="#fff" stroke-width="3"/></svg></button>
            </div>
            <div class="view-cube">
                <svg viewBox="1300 298 144 141">
                    <ellipse cx="1371" cy="368" rx="62" ry="56" fill="none" stroke="#484f58" stroke-width="14"/>
                    <path d="M1358 304l50 20-22 47-54-24z" fill="#b6b8ba"/>
                    <path d="M1332 347l54 24-3 21-46-20z" fill="#a3a5a8"/>
                    <path d="M1386 371l22-47-1 19-24 49z" fill="#8b8e92"/>
                    <path d="M1345 344l34 14-3 9-34-14z" fill="#a6a9b4"/>
                    <path d="M1358 304l50 20-22 47-54-24zM1383 392l3-21" fill="none" stroke="#6e7277" stroke-dasharray="3 1"/>
                    <g class="cube-text">
                        <text x="1371" y="340" transform="rotate(16 1371 335)">TOP</text>
                        <text class="front" x="1359" y="374" transform="rotate(22 1359 371)">FRONT</text>
                    </g>
                    <g class="compass">
                        <text x="1316" y="345" transform="rotate(20 1316 338)">W</text>
                        <text x="1397" y="322" transform="rotate(20 1397 315)">N</text>
                        <text x="1431" y="396" transform="rotate(20 1431 389)">E</text>
                        <text x="1340" y="427" transform="rotate(20 1340 420)">S</text>
                    </g>
                </svg>
                <button class="wcs">WCS<span class="caret"></span></button>
            </div>
            <div class="nav-bar">
                <svg viewBox="0 0 40 259" fill="none" stroke="#3e444c" stroke-width="2">
                    <circle cx="33" cy="6" r="4"/><path d="M31 4l4 4M35 4l-4 4" stroke-width="1"/>
                    <path d="M20 21h13v14a13 13 0 1 1-13-14z"/><circle cx="20" cy="35" r="8"/><path d="M10 45l5-5M30 45l-5-5"/>
                    <path d="M17 59h6l-3 3zM17 146h6l-3 3zM17 193h6l-3 3z" fill="#3e444c" stroke-width="1"/>
                    <path d="M14 100c-3-4-6-8-8-12 2-2 5 0 7 3V79c1-3 3-2 4 0v8-13c1-2 3-2 4 0v13-11c1-3 4-2 4 0v12l3-8c2-2 4 0 3 2l-4 13c-1 4-3 6-5 6z"/>
                    <path d="M6 109l19 18M24 109L6 128M6 114v-5h5M19 109h5v5M6 123v5h5"/><circle cx="26" cy="127" r="6"/><path d="M30 132l4 4" stroke-width="4"/>
                    <path d="M17 182v-20h-3l5-6 5 6h-3v20zM12 175c-9-2-9-7 0-9M26 166c10 2 8 8-4 8h-8M13 171l-5 3 5 3"/>
                    <path d="M6 207h7v8H6zM16 207h7v8h-7zM26 207h7v8h-7zM6 219h19v16H6z"/><path d="M12 222v10l7-5z" fill="#3e444c" stroke="none"/>
                    <circle cx="33" cy="252" r="4"/><path d="M31 252h4" stroke-width="1"/>
                </svg>
            </div>
            <div class="command">
                <div class="command-side">
                    <i class="grip wide"></i>
                    <button aria-label="Close"><svg><use href="#x"/></svg></button>
                    <button aria-label="Customize"><svg><use href="#wrench"/></svg></button>
                </div>
                <div class="command-main">
                    <pre>Command: *Cancel*
Command:</pre>
                    <div class="command-input">
                        <svg><use href="#prompt"/></svg><span class="caret"></span>
                        <input type="text" placeholder="Type a command" aria-label="Type a command">
                        <span class="caret up"></span>
                    </div>
                </div>
            </div>
        </section>

        <aside class="layer-manager">
            <h2 class="palette-title"><i class="grip"></i>LAYER PROPERTIES MANAGER</h2>
            <div class="layer-top">
                <span>Current layer: 0</span>
                <div class="layer-search"><input type="text" placeholder="Search for layer" aria-label="Search for layer"><svg><use href="#search"/></svg></div>
            </div>
            <div class="layer-tools">
                <button aria-label="New property filter"><svg><use href="#folder-filter"/></svg></button>
                <button aria-label="New group filter"><svg><use href="#folder"/></svg></button>
                <i class="sep"></i>
                <button aria-label="Layer states"><svg><use href="#lay-state"/></svg></button>
                <button class="gap" aria-label="New layer"><svg><use href="#lay-new"/></svg></button>
                <button aria-label="New layer frozen"><svg><use href="#lay-vp"/></svg></button>
                <button aria-label="Delete layer"><svg><use href="#lay-del"/></svg></button>
                <button aria-label="Set current"><svg><use href="#lay-set"/></svg></button>
                <button class="push" aria-label="Refresh"><svg><use href="#refresh"/></svg></button>
                <button aria-label="Overrides"><svg><use href="#toggle"/></svg></button>
                <button aria-label="Settings"><svg><use href="#gear"/></svg></button>
            </div>
            <div class="layer-main">
                <div class="tree"><svg><use href="#chevrons"/></svg><svg><use href="#chevrons"/></svg></div>
                <div class="layer-list">
                    <table>
                        <colgroup><col class="c-status"><col class="c-name"><col class="c-split"><col class="c-icon"><col class="c-icon"><col class="c-icon"><col class="c-icon"><col class="c-color"><col class="c-type"><col class="c-weight"></colgroup>
                        <thead>
                            <tr><th>S...</th><th><div class="sorted">Name<span class="caret up"></span></div></th><td class="split"></td><th>O..</th><th>F...</th><th>L...</th><th>P...</th><th>Color</th><th>Linetype</th><th>Lineweight</th></tr>
                        </thead>
                        <tbody>
                            <tr><td><svg><use href="#check"/></svg></td><td>0</td><td class="split"></td><td><svg><use href="#bulb"/></svg></td><td><svg><use href="#sun"/></svg></td><td><svg><use href="#lock-open"/></svg></td><td><svg><use href="#print"/></svg></td><td><i class="swatch"></i>wh...</td><td>Continu...</td><td><i class="rule"></i>Default</td></tr>
                            <tr class="selected"><td><svg><use href="#layer-blue"/></svg></td><td>Hperb</td><td class="split"></td><td><svg><use href="#bulb-off"/></svg></td><td><svg><use href="#sun"/></svg></td><td><svg><use href="#lock-open"/></svg></td><td><svg><use href="#print"/></svg></td><td><i class="swatch"></i>wh...</td><td>Continu...</td><td><i class="rule"></i>Default</td></tr>
                        </tbody>
                    </table>
                    <div class="hscroll"></div>
                </div>
            </div>
            <div class="layer-foot"><svg><use href="#folder-flash"/></svg><span class="caret"></span><span class="filter-name">All: 2 layers</span></div>
        </aside>
    </main>

    <footer class="statusbar">
        <button class="menu" aria-label="Layout menu"><svg><use href="#menu"/></svg></button>
        <a href="#" class="layout active">Model</a>
        <a href="#" class="layout">Layout1</a>
        <i class="slash"></i>
        <a href="#" class="layout">Layout2</a>
        <i class="slash"></i>
        <button class="add" aria-label="New layout"><svg><use href="#plus"/></svg></button>
        <i class="slash"></i>
        <div class="toggles">
            <div class="set"><button class="model">MODEL</button></div>
            <div class="set"><button class="on" aria-label="Grid"><svg><use href="#s-grid"/></svg></button><button aria-label="Snap"><svg><use href="#s-snap"/></svg></button><button class="drop" aria-label="Snap options"><span class="caret"></span></button></div>
            <div class="set"><button class="on" aria-label="Ortho"><svg><use href="#s-ortho"/></svg></button><button aria-label="Polar"><svg><use href="#s-polar"/></svg></button><button class="drop" aria-label="Polar options"><span class="caret"></span></button><button aria-label="Isodraft"><svg><use href="#s-iso"/></svg></button><button class="drop" aria-label="Isodraft options"><span class="caret"></span></button></div>
            <div class="set"><button class="on" aria-label="Tracking"><svg><use href="#s-track"/></svg></button><button class="on" aria-label="Object snap"><svg><use href="#s-osnap"/></svg></button><button class="drop" aria-label="Object snap options"><span class="caret"></span></button></div>
            <div class="set"><button class="on" aria-label="Annotation visibility"><svg><use href="#s-vis"/></svg></button><button aria-label="Auto scale"><svg><use href="#s-auto"/></svg></button><button aria-label="Annotation scale"><svg><use href="#s-anno"/></svg></button><button class="scale">1:1<span class="caret"></span></button></div>
            <div class="set"><button aria-label="Workspace"><svg><use href="#gear"/></svg></button><button class="drop" aria-label="Workspace options"><span class="caret"></span></button></div>
            <div class="set"><button aria-label="Monitor"><svg><use href="#plus"/></svg></button></div>
            <div class="set"><button aria-label="Isolate objects"><svg><use href="#s-shapes"/></svg></button></div>
            <div class="set"><button class="plot" aria-label="Plot details"><svg><use href="#s-plot"/></svg></button></div>
            <div class="set"><button aria-label="Clean screen"><svg><use href="#s-full"/></svg></button></div>
            <div class="set"><button class="last" aria-label="Customization"><svg><use href="#menu"/></svg></button></div>
        </div>
    </footer>

    <!-- Notification balloon -->
    <div class="balloon" role="status">
        <div class="balloon-head">
            <span class="info">i</span>
            <strong>Plot and Publish Job Complete</strong>
            <button aria-label="Close"><svg viewBox="0 0 16 16"><path d="M2 2l12 12M14 2L2 14" stroke="#000" stroke-width="2"/></svg></button>
        </div>
        <p>No errors or warnings found</p>
        <a href="#">Click to view plot and publish details...</a>
        <svg class="tail" viewBox="0 0 25 26"><path d="M0 0l23 24V0z" fill="#ffffe1"/><path d="M0 1l23 23V1" fill="none" stroke="#000"/></svg>
    </div>
</body>
</html>
```
FILE: styles.css
```css
* {
    box-sizing: border-box;
}

body {
    display: flex;
    flex-direction: column;
    height: 100vh;
    margin: 0;
    overflow: hidden;
    background-color: #222831;
    border-bottom: 2px solid #000;
    color: #e8eaed;
    font-family: "Open Sans", "Noto Sans", sans-serif;
    font-size: 14px;
    line-height: 20px;
}

.defs {
    display: none;
}

button {
    display: flex;
    align-items: center;
    padding: 0;
    border: 0;
    background: none;
    color: inherit;
    font: inherit;
    white-space: nowrap;
}

input {
    min-width: 0;
    padding: 0;
    border: 0;
    background: none;
    color: inherit;
    font: inherit;
}

a {
    color: inherit;
    text-decoration: none;
}

svg {
    display: block;
    flex: none;
    width: 20px;
    height: 20px;
    overflow: visible;
}

h2,
h3,
p,
pre {
    margin: 0;
    font-size: 14px;
}

/* Shared bits */
.caret {
    flex: none;
    width: 0;
    height: 0;
    border: 5px solid transparent;
    border-top-color: #d9d9d9;
    border-bottom: 0;
}

.caret.small {
    border-width: 4px;
    border-bottom: 0;
}

.caret.dim {
    border-top-color: #6b7078;
}

.caret.up {
    border: 4px solid transparent;
    border-top: 0;
    border-bottom-color: #d9d9d9;
}

.caret.right {
    border: 5px solid transparent;
    border-right: 0;
    border-left-color: #d9d9d9;
}

.caret.bar {
    position: relative;
}

.caret.bar::before {
    content: "";
    position: absolute;
    top: -9px;
    left: -5px;
    width: 10px;
    height: 2px;
    background-color: #d9d9d9;
}

.swatch {
    flex: none;
    width: 18px;
    height: 18px;
    background-color: #fff;
    border: 1px solid #d9d9d9;
}

.rule {
    flex: none;
    width: 55px;
    height: 1px;
    background-color: #fff;
}

.slash {
    width: 1px;
    height: 20px;
    background-color: #5a6373;
    transform: rotate(18deg);
}

.grip {
    width: 4px;
    height: 10px;
    background-image: radial-gradient(circle, #9aa0a8 1px, transparent 1px);
    background-size: 2px 2px;
}

.grip.wide {
    width: 22px;
    height: 8px;
    background-size: 4px 4px;
}

.combo {
    height: 28px;
    padding: 0 5px;
    background-color: #4d596e;
    border: 1px solid #2c333f;
}

.combo .caret {
    margin-left: auto;
}

/* Title bar */
.titlebar {
    display: flex;
    align-items: center;
    height: 40px;
    padding: 0 0 4px 20px;
    flex: none;
}

.logo {
    justify-content: center;
    width: 28px;
    height: 25px;
    margin-right: 5px;
    background-color: #e51650;
    border-left: 4px solid #f36b8c;
    color: #fff;
    font-size: 18px;
    font-weight: bold;
}

.quick-access {
    display: flex;
    align-items: center;
    gap: 10px;
    margin-left: 12px;
}

.quick-access .bar {
    margin-top: 4px;
}

.quick-access .small {
    margin: 0 -2px;
}

.share {
    gap: 6px;
    margin-left: 11px;
    color: #7cc4fa;
}

.window-title {
    display: flex;
    gap: 16px;
    margin: 0 auto 0 176px;
    color: #fff;
}

.account {
    display: flex;
    align-items: center;
    gap: 10px;
}

.help-search {
    width: 224px;
    height: 26px;
    margin: 0 -5px 0 -4px;
    padding: 0 4px;
    background-color: #465062;
}

.help-search::placeholder {
    color: #b4b9c2;
    font-style: italic;
    opacity: 1;
}

.user {
    gap: 6px;
    margin-right: -2px;
}

.apps {
    gap: 8px;
    padding-right: 12px;
    border-right: 1px solid #3f4857;
    height: 28px;
}

.help {
    gap: 8px;
    margin: 0 1px;
}

.help-mark {
    width: 20px;
    height: 20px;
    border-radius: 50%;
    background-color: #d9d9d9;
    color: #222831;
    text-align: center;
    font-weight: bold;
}

.window-buttons {
    display: flex;
    gap: 38px;
    margin: 0 19px 0 98px;
}

/* Ribbon tabs */
.ribbon-tabs {
    display: flex;
    align-items: center;
    flex: none;
    gap: 1px;
    height: 25px;
    padding-left: 4px;
    color: #b4b8be;
}

.ribbon-tabs a {
    height: 25px;
    padding: 3px 12px 0;
}

.ribbon-tabs .active {
    background-color: #3b4453;
    color: #fff;
}

.minimize-ribbon {
    justify-content: center;
    width: 19px;
    height: 9px;
    margin: 2px 4px 0 24px;
    background-color: #f2f2f2;
}

.minimize-ribbon .caret.up {
    border-width: 3px;
    border-top: 0;
    border-bottom-color: #444;
}

/* Ribbon */
.ribbon {
    display: flex;
    flex: none;
    background-color: #3b4453;
}

.panel {
    display: flex;
    flex-direction: column;
    min-width: 0;
    box-shadow: inset -2px 0 #2a313c;
}

.draw { flex: 279 1 0; }
.modify { flex: 316 1 0; }
.annotation { flex: 184 1 0; }
.layers { flex: 341 1 0; }
.block { flex: 100 1 0; }
.props { flex: 277 1 0; }
.groups { flex: 85 1 0; }
.utilities { flex: 121 1 0; }
.clipboard { flex: 113 1 0; }
.view { flex: 104 1 0; }

.tools {
    display: flex;
    height: 98px;
    padding: 5px 0 0 1px;
}

.panel-title {
    display: flex;
    align-items: center;
    justify-content: center;
    gap: 8px;
    height: 26px;
    padding-top: 3px;
}

.panel-title svg {
    width: 8px;
    height: 8px;
}

.props .panel-title svg {
    margin: 0 -80px 0 80px;
}

.view .panel-title {
    justify-content: flex-start;
    padding-left: 6px;
}

.big {
    flex-direction: column;
    justify-content: flex-start;
    flex: none;
    height: 90px;
    padding-top: 3px;
    text-align: center;
    line-height: 20px;
}

.big svg,
.big .letter {
    width: 40px;
    height: 40px;
    margin-bottom: 5px;
}

.big .letter {
    color: #d9d9d9;
    font-size: 46px;
    line-height: 40px;
}

.big .caret {
    margin-top: 4px;
}

.stack {
    display: flex;
    flex-direction: column;
    flex: none;
}

.tool {
    gap: 7px;
    height: 31px;
}

.pressed {
    background-color: #475d78;
    outline: 1px solid #6ec0fb;
    outline-offset: -1px;
}

.icon-row {
    display: flex;
    align-items: center;
    gap: 10px;
    height: 31px;
    padding-left: 4px;
}

.draw .big:nth-child(1) { width: 54px; }
.draw .big:nth-child(2) { width: 53px; }
.draw .big:nth-child(3) { width: 67px; }
.draw .big:nth-child(4) { width: 53px; }

.draw .tool .caret {
    margin-left: 6px;
}

.modify .tools {
    padding-left: 7px;
}

.modify .stack {
    width: 91px;
}

.modify .wide {
    width: 97px;
    margin-left: -3px;
}

.modify .wide .tool {
    padding-right: 18px;
}

.modify .wide .caret {
    margin-left: auto;
}

.annotation .big:nth-child(1) { width: 58px; }
.annotation .big:nth-child(2) { width: 78px; }

.annotation .tool .caret {
    margin-left: 4px;
}

.layers .big {
    width: 73px;
    margin-right: 2px;
}

.layers .stack {
    flex: 1;
    padding-right: 3px;
}

.layers .combo {
    gap: 5px;
    margin: 1px 0 2px;
}

.layers .swatch {
    margin: 0 2px;
}

.block .big { width: 44px; margin-left: 6px; }

.block .tool {
    padding-left: 4px;
}

.props .big { width: 76px; }

.props .stack {
    flex: 1;
    padding: 0 3px 0 4px;
}

.prop {
    display: flex;
    align-items: center;
    gap: 3px;
    height: 31px;
}

.prop .combo {
    flex: 1;
    gap: 6px;
    padding: 0 2px 0 8px;
}

.props .rule {
    width: 78px;
}

.groups .big { width: 52px; }

.groups .tool {
    justify-content: center;
    width: 29px;
    height: 30px;
}

.utilities .big { width: 88px; }
.utilities .tool { padding-left: 3px; }
.clipboard .big { width: 64px; }
.clipboard .tool { padding-left: 3px; }
.view .big { width: 76px; }

/* File tabs */
.file-tabs {
    display: flex;
    align-items: center;
    flex: none;
    height: 33px;
    padding: 3px 0 0 20px;
    color: #fff;
}

.file-tabs .menu {
    margin-right: 16px;
}

.file-tabs a {
    padding: 0 14px;
}

.file-tabs .active,
.statusbar .active {
    background-color: #3b4453;
    font-weight: bold;
}

.file-tabs .active {
    display: flex;
    align-items: center;
    gap: 11px;
    height: 30px;
    margin-left: 10px;
    padding: 0 14px 0 20px;
    clip-path: polygon(10px 0, 100% 0, calc(100% - 10px) 100%, 0 100%);
}

.file-tabs .active svg {
    width: 11px;
    height: 11px;
}

.add {
    margin: 0 16px 0 12px;
}

.add svg {
    width: 18px;
    height: 18px;
}

/* Main area */
main {
    display: flex;
    flex: 1;
    min-height: 0;
    padding-top: 5px;
    background-color: #3b4453;
}

.palette-title {
    display: flex;
    align-items: center;
    gap: 7px;
    flex: none;
    height: 27px;
    margin-top: 3px;
    padding: 0 0 2px 8px;
    background-color: #2e3340;
    border-radius: 5px 5px 0 0;
    font-weight: normal;
}

.properties {
    display: flex;
    flex-direction: column;
    flex: none;
    width: 283px;
    padding-right: 5px;
}

.palette-body {
    display: flex;
    flex: 1;
    min-height: 0;
    padding: 14px 14px 25px 0;
}

.palette-tab {
    display: flex;
    flex-direction: column;
    align-items: center;
    flex: none;
    gap: 10px;
    position: relative;
    width: 28px;
    height: 632px;
    padding-top: 7px;
    background-color: #2e3340;
    border-radius: 5px;
}

.palette-tab svg {
    width: 14px;
    height: 14px;
}

.vertical {
    margin: auto 0 0;
    color: #c4c7cc;
    font-size: 15px;
    writing-mode: vertical-rl;
    transform: rotate(180deg);
}

.palette-tab .insights {
    width: 18px;
    height: 20px;
    margin-bottom: 3px;
}

.scroll {
    position: absolute;
    top: 100%;
    left: 5px;
    width: 5px;
    height: 76px;
    background-color: #2e3340;
    border-radius: 0 0 3px 3px;
}

.grid {
    flex: 1;
    overflow: hidden;
}

.selection {
    display: flex;
    align-items: center;
    gap: 9px;
    height: 35px;
    padding: 2px 0 6px;
}

.selection .combo {
    width: 149px;
    padding-left: 0;
    margin-right: 1px;
    border-left: 0;
}

.grid h3 {
    display: flex;
    align-items: center;
    justify-content: space-between;
    height: 27px;
    padding: 0 10px 0 2px;
    background-color: #2e3340;
    color: #fff;
}

.grid table {
    width: 222px;
    margin: 0 0 3px 14px;
    border-collapse: collapse;
    table-layout: fixed;
}

.grid th,
.grid td {
    height: 26px;
    padding: 0 0 0 9px;
    border: 1px solid #2e3541;
    border-top: 0;
    text-align: left;
    font-weight: normal;
    white-space: nowrap;
}

.grid th {
    width: 97px;
    color: #d0d3d8;
}

.grid td {
    padding-left: 3px;
    color: #fff;
}

.grid .off {
    color: #8b919b;
}

.grid i {
    display: inline-block;
    margin-right: 6px;
    vertical-align: middle;
}

/* Viewport */
.viewport {
    position: relative;
    flex: 1;
    min-width: 0;
    margin-bottom: 5px;
    background-color: #212830;
}

.drawing {
    width: 100%;
    height: 100%;
    overflow: hidden;
}

.view-controls {
    position: absolute;
    top: 6px;
    left: 3px;
    display: flex;
}

.view-window {
    position: absolute;
    top: 9px;
    right: 12px;
    display: flex;
    gap: 9px;
}

.view-window svg {
    width: 16px;
    height: 16px;
}

.view-cube {
    position: absolute;
    top: 71px;
    right: 21px;
    display: flex;
    flex-direction: column;
    align-items: center;
    gap: 10px;
}

.view-cube svg {
    width: 144px;
    height: 141px;
}

.cube-text {
    fill: #4b4f55;
    font: bold 13px "Liberation Sans", sans-serif;
    text-anchor: middle;
}

.cube-text .front {
    font-size: 10px;
}

.compass {
    fill: #a5a8ab;
    font: bold 22px "Liberation Sans", sans-serif;
    text-anchor: middle;
}

.wcs {
    gap: 6px;
    height: 20px;
    margin-right: 4px;
    padding: 0 4px;
    background-color: #9a9dab;
    border-radius: 4px;
    color: #555a66;
    font: 14px "Liberation Sans", sans-serif;
}

.wcs .caret {
    border-top-color: #b5b8c4;
}

.nav-bar {
    position: absolute;
    top: 273px;
    right: 4px;
    width: 40px;
    background-color: #5d636a;
    border-radius: 4px;
    outline: 1px solid #181d24;
}

.nav-bar svg {
    width: 40px;
    height: 259px;
}

.command {
    position: absolute;
    right: -3px;
    bottom: 0;
    left: -3px;
    display: flex;
    height: 77px;
    font-family: "DejaVu Sans Mono", monospace;
    font-size: 15px;
}

.command-side {
    display: flex;
    flex-direction: column;
    align-items: flex-start;
    gap: 10px;
    width: 30px;
    padding: 4px 0 0 4px;
    background-color: #2d3340;
}

.command-side svg {
    width: 16px;
    height: 16px;
}

.command-side .grip {
    margin-bottom: -2px;
}

.command-main {
    display: flex;
    flex-direction: column;
    flex: 1;
}

pre {
    height: 51px;
    padding: 12px 3px 0;
    background-color: rgba(186, 187, 188, 0.78);
    color: #111;
    font: 15px/20px "DejaVu Sans Mono", monospace;
}

.command-input {
    display: flex;
    align-items: center;
    flex: 1;
    margin-top: 1px;
    padding: 0 4px;
    background-color: rgba(222, 223, 224, 0.82);
    color: #333;
}

.command-input .caret {
    margin-left: 3px;
    border-top-color: #444;
}

.command-input .up {
    border-bottom-color: #444;
}

.command-input input {
    flex: 1;
    margin-left: 9px;
}

.command-input input::placeholder {
    color: #5a5b5d;
    font-style: italic;
    opacity: 1;
}

/* Layer manager */
.layer-manager {
    display: flex;
    flex-direction: column;
    flex: none;
    width: 455px;
    padding-left: 5px;
    overflow: hidden;
}

.layer-top {
    display: flex;
    justify-content: space-between;
    height: 38px;
    padding: 8px 0 0 6px;
}

.layer-top span {
    padding-top: 5px;
}

.layer-search {
    display: flex;
    align-items: center;
    width: 156px;
    height: 20px;
    padding-right: 2px;
    background-color: #4d596e;
}

.layer-search input {
    flex: 1;
}

.layer-search input::placeholder {
    color: #b4b9c2;
    opacity: 1;
}

.layer-search svg {
    width: 16px;
    height: 16px;
}

.layer-tools {
    display: flex;
    align-items: center;
    gap: 7px;
    height: 26px;
    padding: 0 15px 2px 3px;
}

.layer-tools .sep {
    width: 1px;
    height: 22px;
    background-color: #6b7483;
}

.layer-tools .gap {
    margin-left: 5px;
}

.layer-tools .push {
    margin-left: auto;
}

.layer-main {
    display: flex;
    flex: 1;
    min-height: 0;
    gap: 5px;
}

.tree {
    display: flex;
    flex-direction: column;
    align-items: center;
    justify-content: space-between;
    width: 33px;
    padding: 6px 0 5px 2px;
    border: 1px solid #2e3541;
}

.tree svg {
    width: 16px;
    height: 16px;
}

.layer-list {
    display: flex;
    flex-direction: column;
    justify-content: space-between;
    flex: 1;
    min-width: 0;
    overflow: hidden;
    background: linear-gradient(#2e3440, #2e3440) 114px 0 / 3px 100% no-repeat;
}

.layer-list table {
    width: 444px;
    border-collapse: collapse;
    table-layout: fixed;
}

.c-status,
.c-icon { width: 23px; }
.c-name { width: 91px; }
.c-split { width: 3px; }
.c-color { width: 60px; }
.c-type { width: 80px; }
.c-weight { width: 95px; }

.layer-list th {
    height: 29px;
    padding: 0 0 0 4px;
    background-color: #464f62;
    border-right: 1px solid #2e3440;
    text-align: left;
    font-weight: normal;
    white-space: nowrap;
}

.layer-list td {
    height: 23px;
    padding: 0 0 0 3px;
    white-space: nowrap;
}

.layer-list td.split {
    padding: 0;
    background-color: #2e3440;
}

.layer-list td svg {
    width: 16px;
    height: 16px;
}

.layer-list td i {
    display: inline-block;
    margin-right: 6px;
    vertical-align: middle;
}

.layer-list .swatch {
    width: 15px;
    height: 15px;
    margin-right: 4px;
}

.layer-list .rule {
    width: 27px;
}

.sorted {
    display: flex;
    align-items: center;
    justify-content: space-between;
    padding-right: 3px;
}

.selected {
    background-color: #7486a5;
}

.hscroll {
    height: 21px;
    background-color: #f0f0f0;
}

.layer-foot {
    display: flex;
    align-items: center;
    gap: 4px;
    height: 56px;
    padding: 6px 0 0 2px;
}

.filter-name {
    margin-left: 3px;
}

/* Status bar */
.statusbar {
    display: flex;
    align-items: center;
    flex: none;
    height: 36px;
    padding: 0 0 6px 20px;
}

.layout {
    padding: 5px 15px;
}

.statusbar .menu {
    margin-right: 11px;
}

.statusbar .active {
    padding: 5px 21px;
    clip-path: polygon(11px 0, 100% 0, calc(100% - 11px) 100%, 0 100%);
    margin-right: -6px;
}

.statusbar .add {
    margin: 0 14px 0 17px;
}

.toggles {
    display: flex;
    gap: 3px;
    margin: 4px 0 0 auto;
}

.set {
    display: flex;
    background-color: #3b4453;
}

.set button {
    justify-content: center;
    width: 29px;
    height: 30px;
}

.set .on {
    background-color: #5c8cc2;
}

.set .drop {
    width: 22px;
}

.set .model {
    width: 59px;
}

.set .scale {
    gap: 5px;
    width: 42px;
}

.set .plot {
    width: 38px;
}

.set .last {
    width: 32px;
    padding-right: 3px;
}

/* Notification */
.balloon {
    position: absolute;
    right: 79px;
    bottom: 49px;
    width: 316px;
    height: 105px;
    padding: 13px 11px 0 17px;
    background-color: #ffffe1;
    border: 1px solid #000;
    border-radius: 16px;
    color: #000;
}

.balloon-head {
    display: flex;
    align-items: center;
    gap: 14px;
    margin-left: -6px;
}

.info {
    width: 18px;
    height: 18px;
    border: 1px solid #8fa3d8;
    border-radius: 50%;
    background-color: #1f4fc4;
    color: #fff;
    font: bold 14px/16px "Liberation Serif", serif;
    text-align: center;
}

.balloon-head button {
    justify-content: center;
    width: 20px;
    height: 20px;
    margin-left: auto;
    border: 1px solid #8a8a8a;
    background-color: #f0f0f0;
}

.balloon-head svg {
    width: 12px;
    height: 12px;
}

.balloon p {
    margin: 8px 0;
}

.balloon a {
    color: #00f;
    text-decoration: underline;
}

.tail {
    position: absolute;
    top: 103px;
    right: 73px;
    width: 25px;
    height: 26px;
}
```
